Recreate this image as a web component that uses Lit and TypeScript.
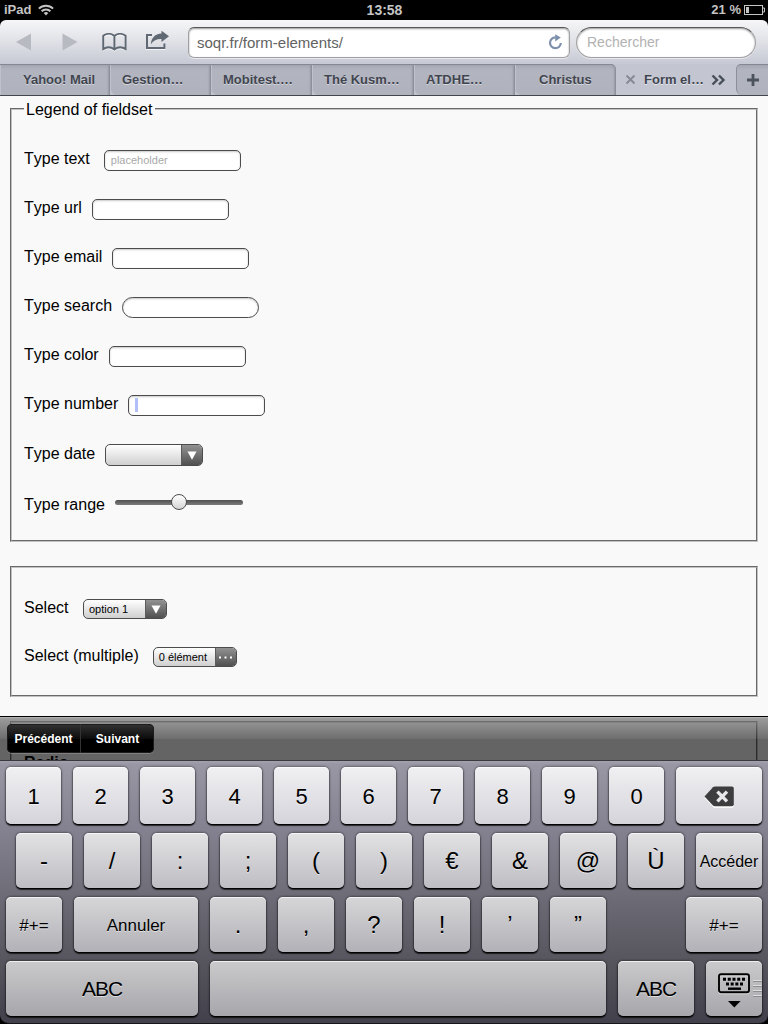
import { LitElement, html, css, svg, nothing } from "lit";
import { customElement, property } from "lit/decorators.js";

const wifiIcon = svg`<svg width="16" height="12" viewBox="0 0 16 12" fill="none" stroke="#c4c4c4" stroke-width="2">
  <path d="M.9 4.6a10 10 0 0 1 14.2 0"/><path d="M3.6 7.3a6.2 6.2 0 0 1 8.8 0"/>
  <path d="M8 11.4 5.7 9.1a3.3 3.3 0 0 1 4.6 0z" fill="#c4c4c4" stroke="none"/></svg>`;

const batteryIcon = svg`<svg width="21" height="10" viewBox="0 0 21 10">
  <rect x=".5" y=".5" width="18" height="9" fill="none" stroke="#c4c4c4"/>
  <path d="M19 3h1.5v4H19" fill="none" stroke="#c4c4c4"/>
  <rect x="2" y="2" width="3" height="6" fill="#c4c4c4"/></svg>`;

const bookIcon = svg`<svg width="26" height="19" viewBox="0 0 26 19" fill="none">
  <path d="M1.200 17.100V3.700C4.600 1.200 9.200 1.200 12.400 3.900c3.200-2.700 7.800-2.700 11.200-.2v13.400c-3.400-2.200-7.800-2.200-11.200.4-3.400-2.600-7.800-2.600-11.200-.4z" stroke="#fff" stroke-opacity=".7" stroke-width="1.600"/>
  <path d="M1.200 16.100V2.700C4.600.2 9.200.2 12.400 2.900c3.200-2.700 7.800-2.700 11.200-.2v13.400c-3.400-2.200-7.800-2.200-11.200.4-3.400-2.600-7.800-2.600-11.200-.4zM12.400 2.900v13.600" stroke="#5f6873" stroke-width="1.900"/></svg>`;

const shareIcon = svg`<svg width="25" height="20" viewBox="0 0 25 20">
  <path d="M6 5H2v13.500h17.600v-4" fill="none" stroke="#fff" stroke-opacity=".7" stroke-width="2" transform="translate(0 .8)"/>
  <path d="M7 5H2v12.900h17.400V13.500" fill="none" stroke="#5f6873" stroke-width="2"/>
  <path d="M16.500.8 24 6.300l-7.500 5.600V9c-4.400-.2-8 1.200-10.600 5.200.3-6 4.200-10.400 10.600-10.600z" fill="#5f6873"/></svg>`;

const reloadIcon = svg`<svg width="15" height="16" viewBox="0 0 15 16">
  <path d="M7.400 3.400A5.400 5.400 0 1 0 12.800 9" fill="none" stroke="#7d90ab" stroke-width="2.200"/>
  <path d="M7.200.2 12.800 3.400 7.200 7.400z" fill="#7d90ab"/></svg>`;

const deleteIcon = svg`<svg width="31" height="22" viewBox="0 0 31 22">
  <path d="M.5 11 9.500 1.600Q10 1 11 1h16.800q2 0 2 2v16q0 2-2 2H11q-1 0-1.500-.6z" fill="#fff" transform="translate(0 .8)"/>
  <path d="M.5 10.500 9 1.300Q9.800.5 11 .5h16.800q2 0 2 2v15.800q0 2-2 2H11q-1.200 0-2-.8z" fill="#3d3d3f"/>
  <path d="m13.400 5.600 9.600 9.800m0-9.800-9.600 9.800" stroke="#e8e8eb" stroke-width="3.400"/></svg>`;

const hideIcon = svg`<svg width="32" height="36" viewBox="0 0 32 36">
  <rect x="1" y="2.500" width="30" height="18" rx="2" fill="none" stroke="#fff" stroke-opacity=".6" stroke-width="1.500"/>
  <rect x="1" y="1.200" width="30" height="18" rx="2" fill="none" stroke="#000" stroke-width="1.900"/>
  <path d="M5 6.200h22" stroke="#000" stroke-width="3" stroke-dasharray="3 1.750"/>
  <path d="M8 11h17" stroke="#000" stroke-width="3" stroke-dasharray="3 1.670"/>
  <path d="M10 15.700h13" stroke="#000" stroke-width="2.400"/>
  <path d="M10 28h12.600l-6.300 6.400z" fill="#000"/></svg>`;

const sans = css`"Liberation Sans", Arial, Helvetica, sans-serif`;

@customElement("status-bar")
class StatusBar extends LitElement {
  static styles = css`
    :host { display: grid; grid-template-columns: 1fr auto 1fr; align-items: center; height: 20px; background: #000; color: #c4c4c4; font: bold 13px/20px ${sans}; padding: 0 3px 0 4px; box-sizing: border-box; }
    .left, .right { display: flex; align-items: center; gap: 7px; height: 19px; }
    .right { justify-content: flex-end; gap: 4px; }
    .right span { margin-right: -1px; }
    .time { font-size: 14px; line-height: 20px; height: 20px; }
    svg { display: block; }
  `;
  render() {
    return html`<div class="left"><span>iPad</span>${wifiIcon}</div>
      <div class="time">13:58</div>
      <div class="right"><span>21 %</span>${batteryIcon}</div>`;
  }
}

@customElement("browser-toolbar")
class BrowserToolbar extends LitElement {
  static styles = css`
    :host { display: block; background: #000; }
    .bar { display: flex; align-items: center; height: 44px; box-sizing: border-box; padding: 0 12px 0 16px; border-radius: 6px 6px 0 0; background: linear-gradient(#f6f6f8, #e2e3e8 45%, #c6c9d4); font-family: ${sans}; }
    svg { display: block; }
    .bar > * { flex-shrink: 0; }
    .arrow { margin-right: 30px; }
    .book { margin: 1px 17px 0 24px; }
    .share { margin: 0 18px 4px 0; }
    .arrow.last { margin-right: 0; }
    .field { display: flex; align-items: center; box-sizing: border-box; height: 31px; background: #fff; border: 1px solid #a0a0a3; border-top-color: #58585c; box-shadow: inset 0 1px 2px #9a9a9a, 0 1px 0 #e8e9ee; }
    .url { width: 382px; border-radius: 6px; padding: 0 6px 0 8px; justify-content: space-between; color: #626262; font-size: 15px; }
    .search { width: 180px; margin-left: 6px; border-radius: 16px; padding-left: 10px; color: #b2b2b2; font-size: 14px; }
  `;
  render() {
    return html`<div class="bar">
      <svg class="arrow" width="16" height="18" viewBox="0 0 16 18"><path d="M0 9 15 .5v17z" fill="#b7bac1"/></svg>
      <svg class="arrow last" width="16" height="18" viewBox="0 0 16 18"><path d="M15.500 9 .5.5v17z" fill="#b7bac1"/></svg>
      <div class="book">${bookIcon}</div>
      <div class="share">${shareIcon}</div>
      <div class="field url"><span>soqr.fr/form-elements/</span>${reloadIcon}</div>
      <div class="field search">Rechercher</div>
    </div>`;
  }
}

@customElement("tab-strip")
class TabStrip extends LitElement {
  static styles = css`
    :host { display: grid; grid-template-columns: 110px 101px 101px 102px 101px 101px 121px 31px; height: 32px; box-sizing: border-box; border-bottom: 1px solid #43464d; background: #c3c6d1; color: #41454f; font: bold 13px/31px ${sans}; }
    .tab { box-sizing: border-box; padding-left: 12px; white-space: nowrap; text-shadow: 0 1px 0 #d5d7de; background: linear-gradient(#a5a8b3, #b2b5c0 5px, #b0b3be); border-top: 1px solid #858892; border-right: 1px solid #8d909a; border-bottom-left-radius: 6px; box-shadow: inset -2px 0 2px -1px #979aa4, inset 1px 0 0 #bfc2cc; line-height: 29px; }
    .first { padding-left: 23px; border-radius: 0; }
    .centered { padding-left: 24px; border-top-right-radius: 5px; }
    .active { display: flex; align-items: center; padding-left: 9px; gap: 8px; text-shadow: 0 1px 0 #e6e7ec; white-space: nowrap; }
    .active span { line-height: 31px; width: 59px; height: 31px; }
    .add { display: grid; place-items: center; border-top: 1px solid #858892; border-left: 1px solid #8d909a; border-radius: 5px 0 0 6px; background: linear-gradient(#a5a8b3, #b2b5c0 5px, #b0b3be); margin-left: -1px; }
    svg { display: block; }
  `;
  render() {
    return html`<div class="tab first">Yahoo! Mail</div>
      <div class="tab">Gestion…</div>
      <div class="tab">Mobitest.…</div>
      <div class="tab">Thé Kusm…</div>
      <div class="tab">ATDHE…</div>
      <div class="tab centered">Christus</div>
      <div class="active">
        <svg width="11" height="11" viewBox="0 0 11 11"><path d="m1.500 1.500 8 8m0-8-8 8" stroke="#868a93" stroke-width="1.900"/></svg>
        <span>Form el…</span>
        <svg width="15" height="12" viewBox="0 0 15 12"><path d="m1.500 1.500 4.500 4.500-4.500 4.500m6.500-9L12.500 6 8 10.500" fill="none" stroke="#484e59" stroke-width="2.400"/></svg>
      </div>
      <div class="add"><svg width="14" height="14" viewBox="0 0 14 14"><path d="M7 1v12M1 7h12" stroke="#4c525e" stroke-width="2.800"/></svg></div>`;
  }
}

@customElement("form-row")
class FormRow extends LitElement {
  @property() label = "";
  @property() kind = "text";
  @property() value = "";
  static styles = css`
    :host { display: flex; align-items: flex-start; gap: 10px; height: 49px; font: 16px/20px ${sans}; color: #000; }
    :host([wide]) { gap: 14px; }
    .label { white-space: nowrap; font-kerning: none; }
    .input { box-sizing: border-box; width: 137px; height: 21px; margin-top: 1px; border: 1px solid #4c4c4c; border-radius: 5px; background: #fff; box-shadow: inset 0 1px 2px #c9c9c9; padding: 3px 6px; color: #a9a9a9; font-size: 11px; line-height: 13px; }
    .search { border-radius: 11px; }
    .caret { width: 3px; height: 14px; margin-top: -1px; background: #b1c0fa; }
    .select { display: flex; box-sizing: border-box; height: 20px; width: 84px; margin-top: 1px; border: 1px solid #4c4c4c; border-radius: 5px; overflow: hidden; background: linear-gradient(#fff, #cfcfcf); font-size: 11px; line-height: 19px; }
    .date { width: 98px; height: 22px; margin-top: 0; }
    .value { flex: 1; padding-left: 5px; white-space: nowrap; }
    .cap { display: grid; place-items: center; width: 20px; border-left: 1px solid #5c5c5c; background: linear-gradient(#929292, #505050); }
    .slider { display: flex; align-items: center; width: 128px; height: 16px; margin: -1px 0 0 .5px; }
    .track { flex: 1; height: 5px; background: linear-gradient(#505050, #7c7c7c); border-radius: 3px 0 0 3px; }
    .track.end { border-radius: 0 3px 3px 0; }
    .thumb { box-sizing: border-box; width: 16px; height: 16px; margin: 0 -1px; border: 1px solid #4c4c4c; border-radius: 50%; background: linear-gradient(#fff, #d4d4d4); z-index: 1; }
    svg { display: block; }
  `;
  control() {
    const arrow = svg`<svg width="10" height="9" viewBox="0 0 10 9"><path d="M.5.500h9L5 8.800z" fill="#fff"/></svg>`;
    const dots = svg`<svg width="13" height="3" viewBox="0 0 13 3"><path d="M0 .5h2v2H0zM5.500.5h2v2h-2zM11 .5h2v2h-2z" fill="#fff"/></svg>`;
    switch (this.kind) {
      case "range": return html`<div class="slider"><div class="track"></div><div class="thumb"></div><div class="track end"></div></div>`;
      case "date": return html`<div class="select date"><div class="value"></div><div class="cap">${arrow}</div></div>`;
      case "select": return html`<div class="select"><div class="value">${this.value}</div><div class="cap">${arrow}</div></div>`;
      case "multiple": return html`<div class="select"><div class="value">${this.value}</div><div class="cap">${dots}</div></div>`;
      case "number": return html`<div class="input"><div class="caret"></div></div>`;
      default: return html`<div class="input ${this.kind}">${this.value}</div>`;
    }
  }
  render() {
    return html`<div class="label">${this.label}</div>${this.control()}`;
  }
}

interface Key { label?: unknown; w: number; cls?: string }
const glyphKeys = (text: string, w = 56): Key[] => [...text].map((label) => ({ label, w }));

@customElement("touch-keyboard")
class TouchKeyboard extends LitElement {
  static styles = css`
    :host { display: block; background: #000; }
    .board { display: grid; grid-template-rows: 57px 55px 55px 55px; row-gap: 9px; height: 264px; box-sizing: border-box; padding: 6px 6px 0; border-top: 1px solid #3a393e; border-bottom: 1px solid #15151a; border-radius: 0 0 9px 9px; background: linear-gradient(#a5a2b0, #9a97a5 3px, #83818f 27%, #6a6973 55%, #55545d 78%, #42414b); font: 24px/1 ${sans}; color: #000; }
    .row { display: flex; gap: 12px; }
    .second { padding-left: 10px; }
    .key { display: grid; place-items: center; box-sizing: border-box; border-radius: 5px; box-shadow: inset 0 1px 0 #ffffffb0, 0 1px 1px #000, 0 2px 1px #0009, 0 0 2px 1px #0005; text-shadow: 0 1px 0 #ffffff90; white-space: nowrap; }
    .digits .key { background: linear-gradient(#f0f0f2, #d5d4db); font-size: 22px; padding-top: 2px; }
    .second .key { background: linear-gradient(#e2e2e4, #bebdc3); }
    .third .key { background: linear-gradient(#d6d6d8, #b2b1b7); }
    .fourth .key { background: linear-gradient(#cacacc, #a7a6ab); }
    .row .word { font-size: 17px; padding-top: 2px; }
    .row .go { font-size: 16px; padding-top: 2px; }
    .row .abc { font-size: 21px; letter-spacing: -1px; }
    .row .gap { background: none; box-shadow: none; }
    .row .hide { display: flex; align-items: center; justify-content: flex-end; padding-top: 4px; }
    .grip { margin: -4px 0 0 3px; }
    svg { display: block; }
  `;
  row(cls: string, keys: Key[]) {
    return html`<div class="row ${cls}">${keys.map((k) => html`<div class="key ${k.cls ?? ""}" style="width:${k.w}px">${k.label ?? nothing}</div>`)}</div>`;
  }
  render() {
    const grip = html`<svg class="grip" width="9" height="20" viewBox="0 0 9 20"><path d="M0 1.500h9M0 6.500h9M0 11.500h9M0 16.500h9" stroke="#dededf"/><path d="M0 2.500h9M0 7.500h9M0 12.500h9M0 17.500h9" stroke="#8e8e92"/></svg>`;
    return html`<div class="board">
      ${this.row("digits", [...glyphKeys("1234567890", 55), { label: deleteIcon, w: 86 }])}
      ${this.row("second", [...glyphKeys("-/:;()€&@Ù"), { label: "Accéder", w: 66, cls: "go" }])}
      ${this.row("third", [{ label: "#+=", w: 56, cls: "word" }, { label: "Annuler", w: 124, cls: "word" }, ...glyphKeys(".,?!’”"), { w: 56, cls: "gap" }, { label: "#+=", w: 76, cls: "word" }])}
      ${this.row("fourth", [{ label: "ABC", w: 192, cls: "abc" }, { w: 396 }, { label: "ABC", w: 76, cls: "abc" }, { label: html`${hideIcon}${grip}`, w: 56, cls: "hide" }])}
    </div>`;
  }
}

@customElement("app-root")
class AppRoot extends LitElement {
  static styles = css`
    :host { display: block; width: 768px; height: 1024px; overflow: hidden; font-family: ${sans}; }
    .page { height: 664px; box-sizing: border-box; overflow: hidden; padding: 12px 10px 0; background: #f9f9f9; }
    .set { box-sizing: border-box; border: 1px solid; border-color: #696969 #c2c2c2 #c2c2c2 #696969; margin-bottom: 24px; }
    .inner { box-sizing: border-box; height: 100%; border: 1px solid; border-color: #c2c2c2 #696969 #696969 #c2c2c2; padding-left: 12px; }
    .inputs { height: 434px; }
    .selects { height: 131px; }
    .radios { height: 120px; }
    .legend { width: 127px; height: 20px; margin: -10px 0 29px; padding-left: 2px; padding-right: 2px; background: #f9f9f9; font-size: 16px; line-height: 20px; white-space: nowrap; }
    .push { margin-top: 1px; }
    .range { margin-top: 2px; }
    .selects form-row:first-child { margin-top: 30px; height: 48px; gap: 14.5px; }
    .heading { padding-top: 30px; font-size: 16px; line-height: 20px; font-weight: bold; }
    .accessory { position: relative; height: 44px; box-sizing: border-box; margin-top: -44px; border-top: 1px solid #000; padding: 7px 7px 0; background: linear-gradient(#ffffff60, #ffffff10 22px, transparent 22px), rgba(0, 0, 0, 0.6); box-shadow: inset 0 1px 0 #b0b0b0; }
    .nav { display: flex; width: 147px; height: 29px; border-radius: 5px; background: linear-gradient(#333, #0c0c0c 50%, #000 50%); box-shadow: inset 0 0 0 1px #1c1c1c, 0 1px 0 #808080; color: #fff; font: bold 12px/31px ${sans}; text-align: center; }
    .nav div { flex: 1; }
    .nav div + div { border-left: 1px solid #333; }
  `;
  render() {
    return html`<status-bar></status-bar>
      <browser-toolbar></browser-toolbar>
      <tab-strip></tab-strip>
      <div class="page">
        <div class="set inputs"><div class="inner">
          <div class="legend">Legend of fieldset</div>
          <form-row wide label="Type text" value="placeholder"></form-row>
          <form-row label="Type url"></form-row>
          <form-row label="Type email"></form-row>
          <form-row label="Type search" kind="search"></form-row>
          <form-row label="Type color"></form-row>
          <form-row label="Type number" kind="number"></form-row>
          <form-row class="push" label="Type date" kind="date"></form-row>
          <form-row class="range" label="Type range" kind="range"></form-row>
        </div></div>
        <div class="set selects"><div class="inner">
          <form-row wide label="Select" kind="select" value="option 1"></form-row>
          <form-row wide label="Select (multiple)" kind="multiple" value="0 élément"></form-row>
        </div></div>
        <div class="set radios"><div class="inner"><div class="heading">Radio</div></div></div>
      </div>
      <div class="accessory"><div class="nav"><div>Précédent</div><div>Suivant</div></div></div>
      <touch-keyboard></touch-keyboard>`;
  }
}
